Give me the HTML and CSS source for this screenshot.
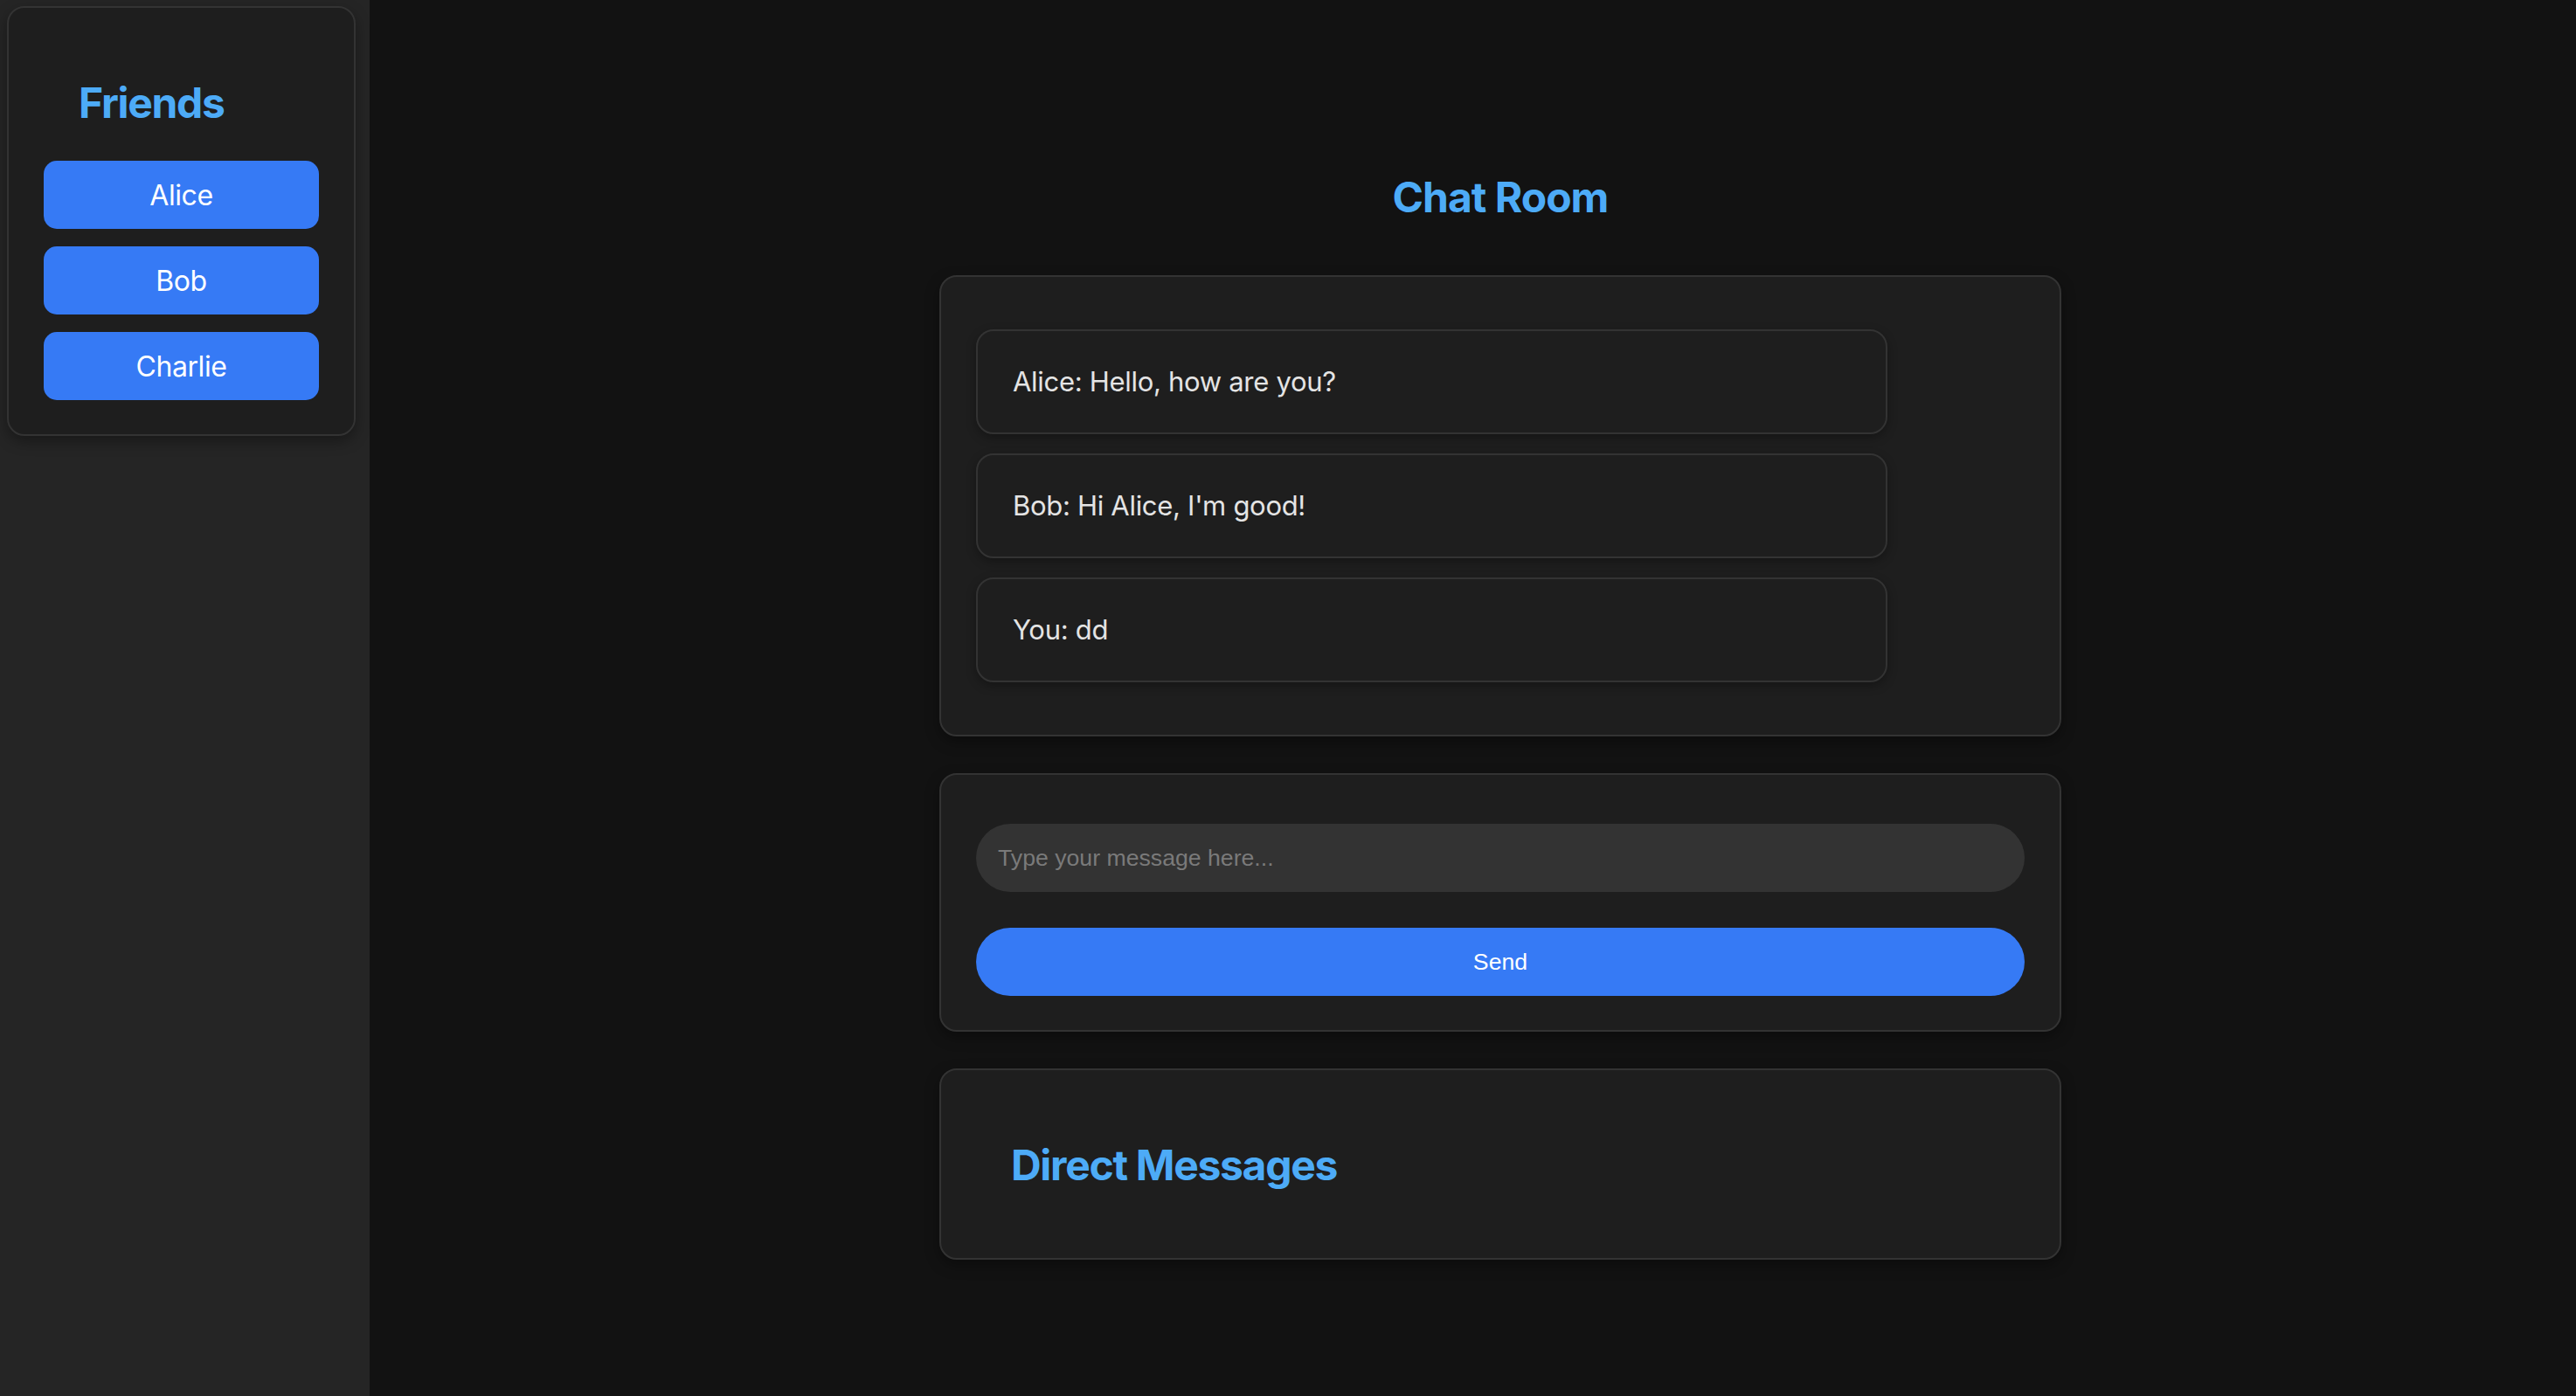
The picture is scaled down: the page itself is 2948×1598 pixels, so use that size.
FILE: index.html
```html
<!DOCTYPE html>
<html lang="en">
<head>
<meta charset="utf-8">
<title>Chat Room</title>
<link rel="stylesheet" href="styles.css">
</head>
<body>
  <aside class="sidebar">
    <div class="panel friends">
      <h2 class="section-title">Friends</h2>
      <div class="friend-list">
        <button class="friend-btn">Alice</button>
        <button class="friend-btn">Bob</button>
        <button class="friend-btn">Charlie</button>
      </div>
    </div>
  </aside>
  <main class="main">
    <div class="column">
      <h1 class="page-title">Chat Room</h1>
      <section class="panel chat">
        <div class="message">Alice: Hello, how are you?</div>
        <div class="message">Bob: Hi Alice, I'm good!</div>
        <div class="message">You: dd</div>
      </section>
      <section class="panel composer">
        <input class="msg-input" type="text" placeholder="Type your message here...">
        <button class="send-btn">Send</button>
      </section>
      <section class="panel dms">
        <h2 class="section-title">Direct Messages</h2>
      </section>
    </div>
  </main>
</body>
</html>
```

FILE: styles.css
```css
* {
  box-sizing: border-box;
}

html, body {
  height: 100%;
}

body {
  margin: 0;
  background: #121212;
  color: #e0e0e0;
  font-family: Inter, "Noto Sans", sans-serif;
  display: flex;
  align-items: stretch;
}

.sidebar {
  width: 423px;
  flex: 0 0 423px;
  background: #252525;
  padding: 7px 16px 0 8px;
}

.panel {
  background: #1e1e1e;
  border: 2px solid #333333;
  border-radius: 20px;
  box-shadow: 0 6px 16px rgba(0, 0, 0, 0.35);
}

.friends {
  padding: 40px 40px 39px;
}

.section-title {
  margin: 0;
  padding: 40px 40px 37px;
  font-size: 48px;
  line-height: 58px;
  font-weight: 700;
  letter-spacing: -1.3px;
  color: #4dabf7;
}

.friend-list {
  display: flex;
  flex-direction: column;
  gap: 20px;
}

.friend-btn {
  height: 78px;
  border: none;
  border-radius: 15px;
  background: #367af5;
  color: #ffffff;
  font-family: Inter, "Noto Sans", sans-serif;
  font-size: 32px;
  font-weight: 400;
  letter-spacing: -0.4px;
  padding: 0;
}

.main {
  flex: 1;
  padding: 197px 0 40px 63px;
}

.column {
  width: 1284px;
  margin: 0 auto;
  display: flex;
  flex-direction: column;
  gap: 42px;
}

.page-title {
  margin: 0 0 18px;
  text-align: center;
  font-size: 48px;
  line-height: 58px;
  font-weight: 700;
  letter-spacing: -1px;
  color: #4dabf7;
}

.chat {
  padding: 60px 40px;
  display: flex;
  flex-direction: column;
  gap: 22px;
}

.message {
  width: 1043px;
  height: 120px;
  padding: 40px;
  background: #1e1e1e;
  border: 2px solid #333333;
  border-radius: 20px;
  box-shadow: 0 4px 12px rgba(0, 0, 0, 0.3);
  font-size: 31px;
  line-height: 36px;
  letter-spacing: -0.3px;
  color: #e4e4e4;
}

.composer {
  padding: 56px 40px 39px;
  display: flex;
  flex-direction: column;
  gap: 41px;
}

.msg-input {
  height: 78px;
  width: 100%;
  border: none;
  border-radius: 39px;
  background: #333333;
  color: #e0e0e0;
  padding: 0 25px;
  font-family: "Liberation Sans", Arial, sans-serif;
  font-size: 26.67px;
  outline: none;
}

.msg-input::placeholder {
  color: #7a7a7a;
}

.send-btn {
  height: 78px;
  width: 100%;
  border: none;
  border-radius: 39px;
  background: #367af5;
  color: #ffffff;
  font-family: "Liberation Sans", Arial, sans-serif;
  font-size: 26.67px;
  padding: 0;
}

.dms {
  padding: 40px;
}
```
